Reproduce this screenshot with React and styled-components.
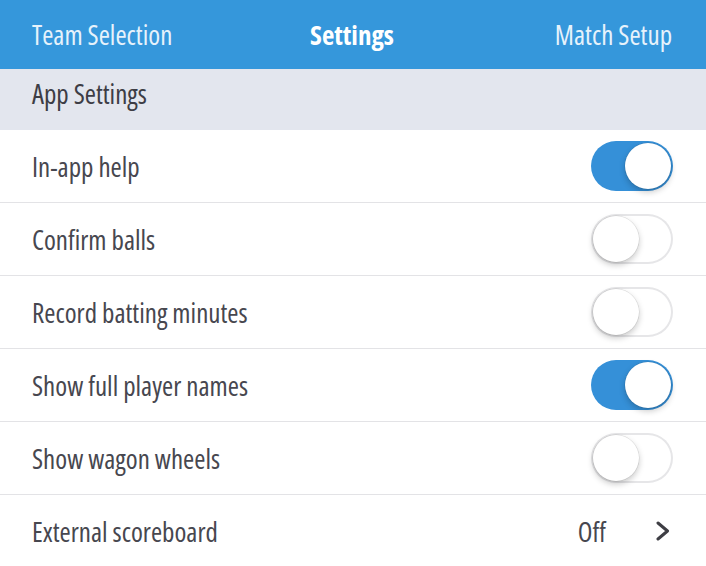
import React, { useState } from "react";
import styled, { createGlobalStyle } from "styled-components";

const Global = createGlobalStyle`
  html, body { margin: 0; padding: 0; background: #ffffff; }
  body { font-family: "Open Sans", "DejaVu Sans", sans-serif; font-stretch: 77%; }
  * { box-sizing: border-box; }
`;

const Screen = styled.div`
  width: 706px;
  height: 566px;
  overflow: hidden;
  background: #ffffff;
`;

const NavBar = styled.div`
  height: 69px;
  background: #3597db;
  display: grid;
  grid-template-columns: 1fr auto 1fr;
  align-items: center;
  padding: 0 34px 0 32px;
`;

const NavItem = styled.div`
  font-size: 27px;
  font-stretch: 77%;
  color: ${(p) => (p.$active ? "#ffffff" : "#e6f2fb")};
  font-weight: ${(p) => (p.$active ? 700 : 400)};
  justify-self: ${(p) => p.$align};
  padding-bottom: 1px;
`;

const SectionHeader = styled.div`
  height: 61px;
  background: #e3e6ee;
  display: flex;
  align-items: center;
  padding: 0 32px 13px;
  font-size: 27px;
  font-stretch: 77%;
  color: #3d3d45;
`;

const Row = styled.div`
  height: 73px;
  border-bottom: 1px solid #e3e3e6;
  display: flex;
  align-items: center;
  justify-content: space-between;
  padding: 0 33px 0 32px;
`;

const Label = styled.div`
  font-size: 27px;
  font-stretch: 77%;
  color: #47474f;
`;

const Track = styled.button`
  position: relative;
  width: 82px;
  height: 50px;
  border-radius: 25px;
  border: none;
  padding: 0;
  cursor: pointer;
  background: ${(p) => (p.$on ? "#3590d8" : "#ffffff")};
  box-shadow: ${(p) => (p.$on ? "none" : "inset 0 0 0 2px #e6e6e8")};
`;

const Knob = styled.span`
  position: absolute;
  top: 2px;
  left: ${(p) => (p.$on ? "34px" : "2px")};
  width: 46px;
  height: 46px;
  border-radius: 50%;
  background: #ffffff;
  box-shadow: 0 3px 6px rgba(0, 0, 0, 0.22), 0 0 0 0.5px rgba(0, 0, 0, 0.12);
`;

const Value = styled.div`
  display: flex;
  align-items: center;
  gap: 50px;
  font-size: 27px;
  font-stretch: 77%;
  color: #47474f;
  padding-right: 3px;
`;

const Toggle = ({ on, onClick }) => (
  <Track $on={on} onClick={onClick}>
    <Knob $on={on} />
  </Track>
);

const Chevron = () => (
  <svg width="14" height="20" viewBox="0 0 14 20">
    <path d="M2 2 L11.5 10 L2 18" fill="none" stroke="#3e3e44" strokeWidth="3" strokeLinecap="round" strokeLinejoin="round" />
  </svg>
);

export default function App() {
  const [settings, setSettings] = useState([
    { label: "In-app help", on: true },
    { label: "Confirm balls", on: false },
    { label: "Record batting minutes", on: false },
    { label: "Show full player names", on: true },
    { label: "Show wagon wheels", on: false },
  ]);
  const flip = (i) =>
    setSettings((s) => s.map((x, j) => (j === i ? { ...x, on: !x.on } : x)));

  return (
    <Screen>
      <Global />
      <NavBar>
        <NavItem $align="start">Team Selection</NavItem>
        <NavItem $align="center" $active>Settings</NavItem>
        <NavItem $align="end">Match Setup</NavItem>
      </NavBar>
      <SectionHeader>App Settings</SectionHeader>
      {settings.map((s, i) => (
        <Row key={s.label}>
          <Label>{s.label}</Label>
          <Toggle on={s.on} onClick={() => flip(i)} />
        </Row>
      ))}
      <Row>
        <Label>External scoreboard</Label>
        <Value>
          Off
          <Chevron />
        </Value>
      </Row>
    </Screen>
  );
}
